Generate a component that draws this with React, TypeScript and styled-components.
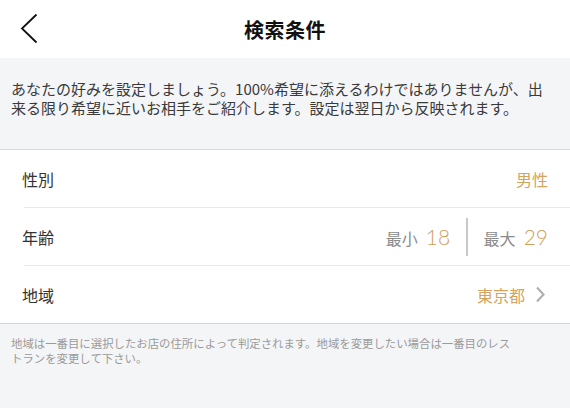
import styled, { createGlobalStyle } from "styled-components";

const GlobalStyle = createGlobalStyle`
  html, body {
    margin: 0;
    padding: 0;
    background: #f4f5f7;
  }
  body {
    font-family: "Noto Sans CJK JP", "Noto Sans", sans-serif;
    color: #333;
  }
`;

const Page = styled.div`
  width: 570px;
  min-height: 408px;
  background: #f4f5f7;
`;

const Header = styled.header`
  height: 58px;
  background: #fff;
  display: grid;
  grid-template-columns: 58px 1fr 58px;
  align-items: center;
`;

const BackButton = styled.button`
  border: 0;
  background: none;
  padding: 0 0 0 19px;
  height: 58px;
  display: flex;
  align-items: center;
  cursor: pointer;
`;

const Title = styled.h1`
  margin: 0;
  text-align: center;
  font-size: 20px;
  font-weight: 700;
  color: #111;
  letter-spacing: 0.5px;
`;

const Intro = styled.div`
  height: 92px;
  box-sizing: border-box;
  padding: 21px 11px 0;
  font-size: 15px;
  line-height: 19px;
  color: #3a3a3a;
  border-bottom: 1px solid #d9d9d9;
`;

const Line = styled.div`
  white-space: nowrap;
`;

const List = styled.section`
  background: #fff;
  border-bottom: 1px solid #d4d4d4;
`;

const Row = styled.div`
  height: 57px;
  display: flex;
  align-items: center;
  justify-content: space-between;
  padding: 0 22px;
`;

const Divider = styled.div`
  height: 1px;
  margin-left: 24px;
  background: #e9e9e9;
`;

const Label = styled.span`
  font-size: 16px;
  color: #333;
`;

const Value = styled.span`
  display: flex;
  align-items: center;
  font-size: 16px;
  color: #d4a45e;
`;

const Range = styled.div`
  display: flex;
  align-items: center;
  height: 38px;
`;

const RangePart = styled.span`
  display: flex;
  align-items: baseline;
  gap: 8px;
`;

const RangeLabel = styled.span`
  font-size: 16px;
  color: #8c8c8c;
`;

const Num = styled.span`
  font-family: "Lato", "Noto Sans", sans-serif;
  font-weight: 300;
  font-size: 21px;
  color: #d09f58;
`;

const VBar = styled.span`
  width: 1.5px;
  align-self: stretch;
  background: #c8c8c8;
  margin: 0 16px;
`;

const Chevron = styled.svg`
  margin-left: 10px;
  margin-right: 2px;
`;

const Note = styled.div`
  padding: 12px 11px 0;
  font-size: 11.4px;
  line-height: 15px;
  color: #9a9a9a;
`;

export default function App() {
  return (
    <Page>
      <GlobalStyle />
      <Header>
        <BackButton aria-label="戻る">
          <svg width="20" height="32" viewBox="0 0 20 32">
            <polyline
              points="17.5,1.5 3,15.5 17.5,29.5"
              fill="none"
              stroke="#111"
              strokeWidth="1.8"
            />
          </svg>
        </BackButton>
        <Title>検索条件</Title>
        <span />
      </Header>
      <Intro>
        <Line>あなたの好みを設定しましょう。100%希望に添えるわけではありませんが、出</Line>
        <Line>来る限り希望に近いお相手をご紹介します。設定は翌日から反映されます。</Line>
      </Intro>
      <List>
        <Row>
          <Label>性別</Label>
          <Value>男性</Value>
        </Row>
        <Divider />
        <Row>
          <Label>年齢</Label>
          <Range>
            <RangePart>
              <RangeLabel>最小</RangeLabel>
              <Num>18</Num>
            </RangePart>
            <VBar />
            <RangePart>
              <RangeLabel>最大</RangeLabel>
              <Num>29</Num>
            </RangePart>
          </Range>
        </Row>
        <Divider />
        <Row>
          <Label>地域</Label>
          <Value>
            東京都
            <Chevron width="11" height="17" viewBox="0 0 11 17">
              <polyline
                points="2,1.5 8.5,8.5 2,15.5"
                fill="none"
                stroke="#b0b0b0"
                strokeWidth="2.2"
              />
            </Chevron>
          </Value>
        </Row>
      </List>
      <Note>
        <Line>地域は一番目に選択したお店の住所によって判定されます。地域を変更したい場合は一番目のレス</Line>
        <Line>トランを変更して下さい。</Line>
      </Note>
    </Page>
  );
}
